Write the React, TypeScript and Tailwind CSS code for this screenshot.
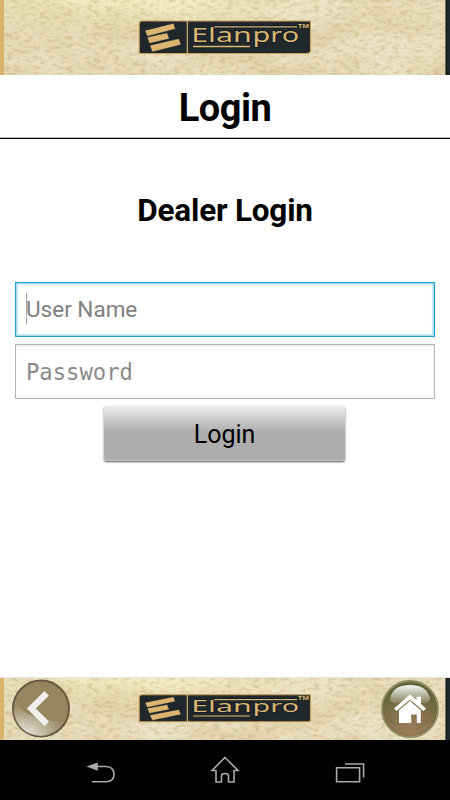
import React from 'react';

const Paper: React.FC<{ id: string }> = ({ id }) => (
  <svg className="absolute inset-0 w-full h-full" aria-hidden="true">
    <defs>
      <filter id={`${id}-cloud`} x="0" y="0" width="100%" height="100%" colorInterpolationFilters="sRGB">
        <feTurbulence type="fractalNoise" baseFrequency="0.014 0.03" numOctaves="5" seed="8" />
        <feColorMatrix values="0 0 0 0 0.79  0 0 0 0 0.71  0 0 0 0 0.47  0.9 0 0 0 -0.3" />
      </filter>
      <filter id={`${id}-grain`} x="0" y="0" width="100%" height="100%" colorInterpolationFilters="sRGB">
        <feTurbulence type="fractalNoise" baseFrequency="0.15 0.3" numOctaves="4" seed="21" />
        <feColorMatrix values="0 0 0 0 0.65  0 0 0 0 0.55  0 0 0 0 0.28  0 0.8 0 0 -0.36" />
      </filter>
      <radialGradient id={`${id}-light`} cx="0.3" cy="0" r="0.5">
        <stop offset="0" stopColor="#f6f2c8" stopOpacity="0.75" />
        <stop offset="1" stopColor="#f6f2c8" stopOpacity="0" />
      </radialGradient>
    </defs>
    <rect width="100%" height="100%" fill="#ece2c5" />
    <rect width="100%" height="100%" filter={`url(#${id}-cloud)`} />
    <rect width="100%" height="100%" fill={`url(#${id}-light)`} />
    <rect width="100%" height="100%" filter={`url(#${id}-grain)`} />
    <rect width="4" height="100%" fill="#d9b36a" />
    <rect x="446" width="4" height="100%" fill="#1f272b" />
    <rect x="445.5" width="1" height="100%" fill="#0b0f10" />
  </svg>
);

const Logo: React.FC<{ className: string }> = ({ className }) => (
  <svg className={className} viewBox="0 0 174 35" preserveAspectRatio="none">
    <path d="M4 1H172.5V31Q172.5 33.5 168 33.5H1.2V4Q1.2 1 4 1Z" fill="#20282b" stroke="#c9a05a" strokeWidth="1.1" />
    <path d="M49.3 1V34" stroke="#d6b069" strokeWidth="1.2" />
    <g fill="#dcb671" stroke="#0d1628" strokeWidth="0.5">
      <path d="M6.8 10.4L35.6 3.2L37.4 9L9.2 16.4Z" />
      <path d="M9 17.2L29.2 12.8L31.4 18.8L11.4 23.6Z" />
      <path d="M11.8 25.2L41 18.6L43.2 24.8L14.2 32Z" />
    </g>
    <path d="M76 6.8H159" stroke="#0d1628" strokeWidth="3" />
    <path d="M76 6.8H159M55 26.5H112" stroke="#dcb671" strokeWidth="1.3" />
    <g fill="#dcb671" stroke="#0d1628" strokeWidth="1.2" paintOrder="stroke" className="font-['Noto_Sans'] text-[20.5px]">
      <text x="53.2" y="22" textLength="60.5" lengthAdjust="spacingAndGlyphs">Elan</text>
      <text x="114.6" y="22" textLength="46.5" lengthAdjust="spacingAndGlyphs">pro</text>
    </g>
    <text x="160" y="7.8" textLength="11" lengthAdjust="spacingAndGlyphs" fill="#dcb671" className="font-['Noto_Sans'] font-bold text-[5.5px]">
      TM
    </text>
  </svg>
);

const BackButton: React.FC = () => (
  <svg width="60" height="60" viewBox="0 0 60 60">
    <defs>
      <radialGradient id="back-shine" cx="0.15" cy="1" r="0.85">
        <stop offset="0" stopColor="#fff" stopOpacity="0.85" />
        <stop offset="1" stopColor="#fff" stopOpacity="0.05" />
      </radialGradient>
    </defs>
    <circle cx="30" cy="29.5" r="28" fill="#958660" stroke="#665a43" strokeWidth="2" />
    <path d="M3.8 22Q12 36 29 38.5Q40 43 53.5 42.5A27 27 0 0 1 3.8 22Z" fill="url(#back-shine)" />
    <path d="M33.5 12L38 16.5L24.8 29.5L38 42.5L33.5 47L15.8 29.5Z" fill="#f2f0eb" />
  </svg>
);

const HomeButton: React.FC = () => (
  <svg width="60" height="60" viewBox="0 0 60 60">
    <defs>
      <radialGradient id="home-fill" cx="0.5" cy="0.88" r="0.75">
        <stop offset="0" stopColor="#9b7b59" />
        <stop offset="0.55" stopColor="#84704c" />
        <stop offset="1" stopColor="#606638" />
      </radialGradient>
      <linearGradient id="home-shine" x1="0" y1="0" x2="0" y2="1">
        <stop offset="0" stopColor="#fff" stopOpacity="0.95" />
        <stop offset="1" stopColor="#fff" stopOpacity="0.15" />
      </linearGradient>
    </defs>
    <circle cx="30" cy="30" r="28" fill="url(#home-fill)" stroke="#8e8b68" strokeWidth="1.8" />
    <path d="M10 19C13 9 20 6 30 6S47 9 50 19C50 27 38 23 30 23S10 27 10 19Z" fill="url(#home-shine)" />
    <path d="M9 44Q30 63 51 44" fill="none" stroke="#b59a64" strokeWidth="0.7" opacity="0.6" />
    <path d="M30 15.5L36.5 21V17.8H41V25L46 29.5L43.5 32L30 20.5L16.5 32L14 29.5Z" fill="#fff" />
    <path d="M30 22L40.8 31.2V44H36.8V35.5H31.2V44H19V31.2Z" fill="#fff" />
  </svg>
);

export default function App() {
  return (
    <div className="w-[450px] h-[800px] flex flex-col bg-white overflow-hidden font-['Roboto',sans-serif] text-black">
      <header className="relative h-[75px] shrink-0 pl-[138px] pt-[20px]">
        <Paper id="top" />
        <Logo className="relative w-[174px] h-[35px]" />
      </header>

      <h1 className="h-[64px] shrink-0 border-b border-black shadow-[inset_0_-1px_0_#b8b8b8] text-center text-[38px] tracking-[-0.5px] leading-[66px] font-bold">Login</h1>

      <main className="flex-1 flex flex-col px-[15px]">
        <h2 className="mt-[50px] h-[44px] text-center text-[31.5px] tracking-[-0.2px] leading-[44px] font-bold">Dealer Login</h2>

        <div className="relative mt-[49px]">
          <input
            type="text"
            placeholder="User Name"
            className="block w-full h-[55px] px-[10px] pb-[1px] border border-[#1d9fd8] shadow-[inset_0_0_1px_1.5px_#a5d9ef] text-[22.5px] placeholder:text-[#808080] outline-none"
          />
          <span className="absolute left-[11px] top-[11px] w-px h-[31px] bg-[#a0a0a0]"></span>
        </div>
        <input
          type="password"
          placeholder="Password"
          className="block mt-[7px] w-full h-[55px] px-[10px] border border-[#b4b4b4] shadow-[inset_0_2px_2px_#eeeeee] font-['DejaVu_Sans_Mono',monospace] text-[22.2px] placeholder:text-[#8a8a8a] outline-none"
        />
        <button className="mt-[7px] mr-[1px] self-center w-[241px] h-[55px] rounded-[2px] bg-linear-to-b from-[#ededed] from-0% via-[#adadad] via-48% to-[#adadad] border-b border-[#c4c4c4] shadow-[0_1px_2px_#555] pt-[4px] text-[25px]">
          Login
        </button>
      </main>

      <footer className="relative h-[62px] shrink-0 flex pl-[11px] shadow-[0_-1px_0_#e6e6e6]">
        <Paper id="bottom" />
        <div className="relative mt-[1px] w-[60px] h-[60px]"><BackButton /></div>
        <Logo className="relative ml-[67px] mt-[16px] w-[174px] h-[29px]" />
        <div className="relative ml-[68px] mt-[1px] w-[60px] h-[60px]"><HomeButton /></div>
      </footer>

      <nav className="h-[60px] shrink-0 bg-black flex items-center">
        <svg width="450" height="60" viewBox="0 0 450 60" fill="none" stroke="#aaaaaa" strokeWidth="1.6">
          <path d="M97 26.5H106Q114 27 114 34.2T106 41.8H92" />
          <path d="M86.5 26.6L97.8 22.5V30.7Z" fill="#aaaaaa" stroke="none" />
          <path d="M225 17.5L238 30.5H234V42H228.5V36Q228.5 33.5 225 33.5T221.5 36V42H216V30.5H212Z" />
          <path d="M336.6 27.8H359.6V41.8H336.6ZM345 24H363.6V37.5" />
        </svg>
      </nav>
    </div>
  );
}
